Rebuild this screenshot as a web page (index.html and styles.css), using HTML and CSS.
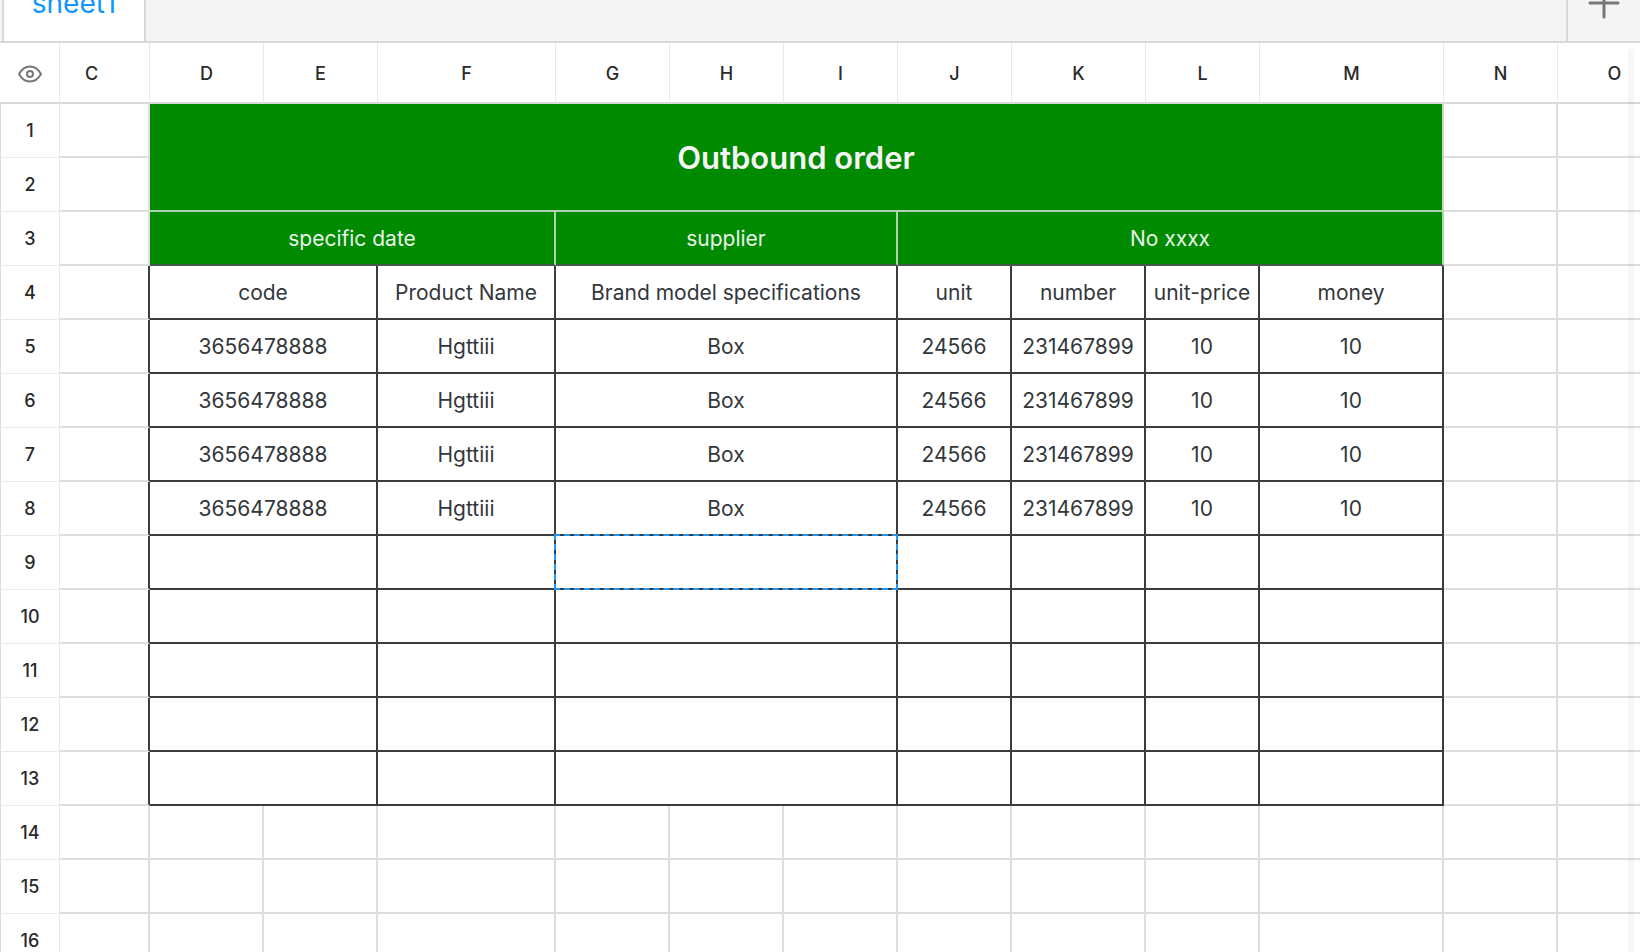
FILE: index.html
```
<!DOCTYPE html>
<html lang="en">
<head>
  <meta charset="UTF-8" />
  <meta name="viewport" content="width=device-width, initial-scale=1.0" />
  <title>Outbound order</title>
  <link rel="stylesheet" href="styles.css">
</head>
<body>
  <nav class="tabs" aria-label="Sheets">
    <button type="button" class="tab">sheet1</button>
    <button type="button" class="add-tab" aria-label="Add sheet">
      <svg width="32" height="32" viewBox="0 0 32 32" fill="none" stroke="#777" stroke-width="3" stroke-linecap="round">
        <path d="M16 2v28M2 16h28" />
      </svg>
    </button>
  </nav>

  <main class="sheet">
    <table>
      <colgroup>
        <col class="w-head"><col class="w-c"><col><col><col class="w-f"><col><col><col><col><col class="w-k"><col><col class="w-m"><col><col>
      </colgroup>
      <thead>
        <tr>
          <th class="corner">
            <svg width="24" height="18" viewBox="0 0 24 18" fill="none" stroke="#777" stroke-width="2" stroke-linejoin="round" role="img" aria-label="Show or hide">
              <path d="M1 9C3.5 4.5 7.300 1.500 12 1.500S20.500 4.500 23 9C20.500 13.500 16.700 16.500 12 16.500S3.500 13.500 1 9z" />
              <circle cx="12" cy="9" r="3" />
            </svg>
          </th>
          <th class="cut">C</th><th>D</th><th>E</th><th>F</th><th>G</th><th>H</th><th>I</th><th>J</th><th>K</th><th>L</th><th>M</th><th>N</th><th>O</th>
        </tr>
      </thead>
      <tbody>
        <tr><th>1</th><td></td><td colspan="10" rowspan="2" class="title">Outbound order</td><td></td><td></td></tr>
        <tr><th>2</th><td></td><td></td><td></td></tr>
        <tr class="info">
          <th>3</th><td></td>
          <td colspan="3" class="green">specific date</td>
          <td colspan="3" class="green">supplier</td>
          <td colspan="4" class="green">No xxxx</td>
          <td></td><td></td>
        </tr>

        <!-- Order lines -->
        <tr class="line">
          <th>4</th><td class="edge"></td>
          <td colspan="2">code</td><td>Product Name</td><td colspan="3">Brand model specifications</td>
          <td>unit</td><td>number</td><td>unit-price</td><td>money</td>
          <td class="out"></td><td class="out"></td>
        </tr>
        <tr class="line">
          <th>5</th><td class="edge"></td>
          <td colspan="2">3656478888</td><td>Hgttiii</td><td colspan="3">Box</td>
          <td>24566</td><td>231467899</td><td>10</td><td>10</td>
          <td class="out"></td><td class="out"></td>
        </tr>
        <tr class="line">
          <th>6</th><td class="edge"></td>
          <td colspan="2">3656478888</td><td>Hgttiii</td><td colspan="3">Box</td>
          <td>24566</td><td>231467899</td><td>10</td><td>10</td>
          <td class="out"></td><td class="out"></td>
        </tr>
        <tr class="line">
          <th>7</th><td class="edge"></td>
          <td colspan="2">3656478888</td><td>Hgttiii</td><td colspan="3">Box</td>
          <td>24566</td><td>231467899</td><td>10</td><td>10</td>
          <td class="out"></td><td class="out"></td>
        </tr>
        <tr class="line">
          <th>8</th><td class="edge"></td>
          <td colspan="2">3656478888</td><td>Hgttiii</td><td colspan="3">Box</td>
          <td>24566</td><td>231467899</td><td>10</td><td>10</td>
          <td class="out"></td><td class="out"></td>
        </tr>
        <tr class="line">
          <th>9</th><td class="edge"></td>
          <td colspan="2"></td><td></td><td colspan="3" class="selected"></td>
          <td></td><td></td><td></td><td></td>
          <td class="out"></td><td class="out"></td>
        </tr>
        <tr class="line">
          <th>10</th><td class="edge"></td>
          <td colspan="2"></td><td></td><td colspan="3"></td>
          <td></td><td></td><td></td><td></td>
          <td class="out"></td><td class="out"></td>
        </tr>
        <tr class="line">
          <th>11</th><td class="edge"></td>
          <td colspan="2"></td><td></td><td colspan="3"></td>
          <td></td><td></td><td></td><td></td>
          <td class="out"></td><td class="out"></td>
        </tr>
        <tr class="line">
          <th>12</th><td class="edge"></td>
          <td colspan="2"></td><td></td><td colspan="3"></td>
          <td></td><td></td><td></td><td></td>
          <td class="out"></td><td class="out"></td>
        </tr>
        <tr class="line">
          <th>13</th><td class="edge"></td>
          <td colspan="2"></td><td></td><td colspan="3"></td>
          <td></td><td></td><td></td><td></td>
          <td class="out"></td><td class="out"></td>
        </tr>

        <tr><th>14</th><td></td><td></td><td></td><td></td><td></td><td></td><td></td><td></td><td></td><td></td><td></td><td></td><td></td></tr>
        <tr><th>15</th><td></td><td></td><td></td><td></td><td></td><td></td><td></td><td></td><td></td><td></td><td></td><td></td><td></td></tr>
        <tr><th>16</th><td></td><td></td><td></td><td></td><td></td><td></td><td></td><td></td><td></td><td></td><td></td><td></td><td></td></tr>
      </tbody>
    </table>
    <div class="scroll-track"></div>
  </main>
</body>
</html>
```
FILE: styles.css
```
*,
*::before,
*::after {
  box-sizing: border-box;
}

body {
  margin: 0;
  height: 100vh;
  overflow: hidden;
  display: flex;
  flex-direction: column;
  font-family: Inter, "Liberation Sans", sans-serif;
  background-color: #fff;
  color: #33373b;
}

/* the tab bar is partly scrolled off the top */
.tabs {
  flex: none;
  display: flex;
  justify-content: space-between;
  height: 78px;
  margin-top: -35px;
  background-color: #f4f4f4;
  border-bottom: 2px solid #d8d8d8;
}

.tabs button {
  font-family: inherit;
  padding: 0;
  border: 0;
  cursor: pointer;
}

.tabs .tab {
  width: 144px;
  margin-left: 2px;
  background-color: #fff;
  border-left: 2px solid #d8d8d8;
  border-right: 2px solid #d8d8d8;
  color: #1296fb;
  font-size: 28px;
}

.tabs .add-tab {
  display: flex;
  align-items: center;
  justify-content: center;
  width: 74px;
  background-color: #f4f4f4;
  border-left: 2px solid #d8d8d8;
}

.sheet {
  position: relative;
  flex: 1;
  min-height: 0;
  overflow: hidden;
}

table {
  table-layout: fixed;
  width: 1672px;
  border-collapse: separate;
  border-spacing: 0;
}

col {
  width: 114px;
}

.w-head {
  width: 60px;
}

.w-c {
  width: 90px;
}

.w-f {
  width: 178px;
}

.w-k {
  width: 134px;
}

.w-m {
  width: 184px;
}

tr {
  height: 54px;
}

thead tr {
  height: 61px;
}

th {
  padding: 0;
  border-right: 1px solid #e8e8e8;
  border-bottom: 1px solid #ebebeb;
  color: #2a2a2a;
  font-size: 18px;
  font-weight: 500;
}

tbody th {
  border-left: 1px solid #dcdcdc;
}

thead th {
  padding-top: 2px;
  border-bottom: 2px solid #d8d8d8;
}

th.cut {
  padding-right: 26px;
}

.corner svg {
  display: block;
  margin: 0 auto;
}

td {
  padding: 0;
  border-right: 2px solid #dedede;
  border-bottom: 2px solid #dedede;
  font-size: 21px;
  text-align: center;
  white-space: nowrap;
}

.title {
  background-color: #008a00;
  border-right-color: #c4d8c4;
  border-bottom-color: #b0d4b0;
  color: #f5f5f5;
  font-size: 31px;
  font-weight: 600;
}

.info .green {
  background-color: #008a00;
  border-right-color: #b0d4b0;
  border-bottom-color: #43594a;
  color: #e8f3e8;
}

.line td {
  border-color: #3a3d40;
}

.line .edge {
  border-bottom-color: #dedede;
}

.line .out {
  border-color: #dedede;
}

.selected {
  position: relative;
}

.selected::after {
  content: "";
  position: absolute;
  inset: -2px;
  border: 2px dashed #2196f3;
}

.scroll-track {
  position: absolute;
  top: 6px;
  right: 6px;
  bottom: 0;
  width: 6px;
  background-color: rgba(0, 0, 0, 0.03);
}
```
